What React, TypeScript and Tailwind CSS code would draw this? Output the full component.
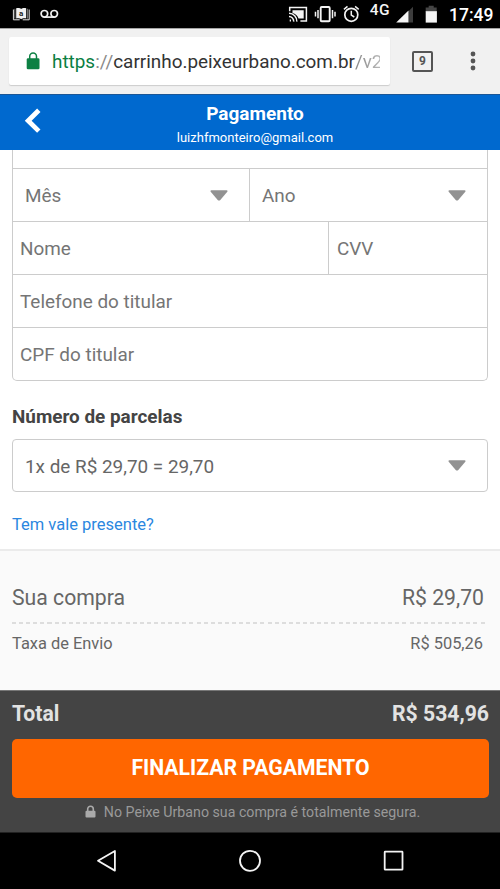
import type { ReactNode } from "react";

function StatusBar() {
  return (
    <div className="flex h-[28px] items-center justify-between bg-black pl-[12px] pr-[10px] text-white">
      <svg width="50" height="28" viewBox="0 0 50 28" fill="none">
        <path d="M4.200 8.200c2-.5 4-.2 5 .8 1-1 3-1.300 5-.8v10.300c-2-.4-4-.1-5 .8-1-.9-3-1.200-5-.8z" fill="#f1f1f1" />
        <path d="M1.400 9.500v10.300h6.300M17.200 9.500v10.300h-6.500" stroke="#e4e4e4" strokeWidth="1" />
        <path d="M2.900 8.800v9.800M15.600 8.800v9.800" stroke="#999" strokeWidth=".8" />
        <text x="9.200" y="16" textAnchor="middle" fontSize="8" fontWeight="700" fill="#222" className="font-['Roboto',sans-serif]">a</text>
        <circle cx="32.400" cy="13.800" r="3.300" stroke="#f1f1f1" strokeWidth="1.700" />
        <circle cx="42.200" cy="13.800" r="3.300" stroke="#f1f1f1" strokeWidth="1.700" />
        <path d="M32.400 17.100h9.800" stroke="#f1f1f1" strokeWidth="1.700" />
      </svg>
      <div className="flex items-center">
        <svg width="161" height="28" viewBox="0 0 161 28" fill="none">
          <g stroke="#f3f3f3" strokeWidth="1.500">
            <path d="M8.700 11.200V7.500h16.700v13.400h-6" />
            <path d="M8 13.300a7.800 7.800 0 0 1 7.800 8.300M8 16.500a4.800 4.800 0 0 1 4.700 5.100" />
            <path d="M8.700 20.500h1.300" strokeWidth="2.200" />
            <path d="M11.500 10.200h11.200v8.300h-5.200c-1-2.700-3-4.700-6-5.500z" fill="#f3f3f3" stroke="none" />
            <rect x="39.700" y="7" width="9" height="14.200" rx="1" strokeWidth="1.900" />
            <path d="M37 9.900v8.400M34.500 11.700v4.800M51.500 9.900v8.400M54 11.700v4.800" />
            <circle cx="70.300" cy="14.800" r="6.500" strokeWidth="1.700" />
            <path d="M70.300 10.800v4.300l3 1.900M62.900 9.400l3.600-3M77.700 9.400l-3.600-3" />
          </g>
          <text x="88.800" y="15.300" fontSize="15.500" fontWeight="500" letterSpacing=".3" fill="#f5f5f5" className="font-['Roboto',sans-serif]">4G</text>
          <path d="M132 6.800v15.800h-4.500V11.200z" fill="#3d3d3d" />
          <path d="M127.500 10.500v12.100h-12.300z" fill="#f5f5f5" />
          <path d="M144.700 12V7.500h3V5.800h5v1.700h3V12z" fill="#454545" />
          <path d="M144.700 11.200h11.200v11.400h-11.200z" fill="#f5f5f5" />
        </svg>
        <span className="mt-[2px] w-[48px] pl-[7px] text-[17.500px] leading-5 font-medium whitespace-nowrap">17:49</span>
      </div>
    </div>
  );
}

function BrowserBar() {
  return (
    <div className="flex h-[66px] items-center border-t border-[#a5a5a5] bg-[#f1f1f1] pb-px pl-[9px]">
      <div className="flex h-[48px] w-[381px] items-center overflow-hidden rounded-[2px] bg-white pl-[17px] shadow-[0_1px_1px_#ccc]">
        <svg width="14" height="18" viewBox="0 0 14 18" fill="none">
          <rect x=".7" y="6.300" width="12.800" height="11" rx="1.300" fill="#0d8043" />
          <path d="M3.700 7V4.400a3.400 3.400 0 0 1 6.800 0V7" stroke="#0d8043" strokeWidth="1.500" />
        </svg>
        <span className="mt-px ml-[12px] w-[328px] overflow-hidden text-[18.900px] leading-7 whitespace-nowrap text-[#333]">
          <span className="text-[#0b8043]">https</span>
          <span className="text-[#8a8a8a]">://</span>
          carrinho.peixeurbano.com.br
          <span className="bg-linear-to-r from-[#888] to-[#bbb] bg-clip-text text-transparent">/v2</span>
        </span>
      </div>
      <span className="ml-[22px] flex size-[21px] items-center justify-center rounded-[2px] border-2 border-[#555] text-[12px] font-bold text-[#555]">9</span>
      <svg className="ml-[37px]" width="6" height="20" viewBox="0 0 6 20" fill="#555">
        <circle cx="3" cy="3" r="2.400" />
        <circle cx="3" cy="10" r="2.400" />
        <circle cx="3" cy="17" r="2.400" />
      </svg>
    </div>
  );
}

function Caret() {
  return (
    <svg width="18" height="11" viewBox="0 0 18 11" fill="#929292">
      <path d="M1.300.3h15.400c.8 0 1.100.9.600 1.500l-7 8.100c-.7.800-1.900.8-2.600 0L.7 1.800C.2 1.200.5.3 1.300.3z" />
    </svg>
  );
}

function Field({ className, children }: { className: string; children: ReactNode }) {
  return <div className={`flex items-center whitespace-nowrap ${className}`}>{children}</div>;
}

function CardForm() {
  return (
    <div className="mx-[12px] flex flex-col divide-y divide-[#ccc] rounded-b-[5px] border border-t-0 border-[#ccc] text-[18.900px] text-[#757575]">
      <div className="h-[19px]" />
      <div className="flex h-[53px] divide-x divide-[#ccc]">
        <Field className="w-[237px] justify-between pl-[12px] pr-[21px]">
          <span className="pt-[3px]">Mês</span>
          <Caret />
        </Field>
        <Field className="flex-1 justify-between pl-[12px] pr-[21px]">
          <span className="pt-[3px]">Ano</span>
          <Caret />
        </Field>
      </div>
      <div className="flex h-[53px] divide-x divide-[#ccc]">
        <Field className="w-[316px] pt-[3px] pl-[7px]">Nome</Field>
        <Field className="flex-1 pt-[3px] pl-[8px]">CVV</Field>
      </div>
      <Field className="h-[53px] pt-[3px] pl-[7px]">Telefone do titular</Field>
      <Field className="h-[52px] pt-[3px] pl-[7px]">CPF do titular</Field>
    </div>
  );
}

export default function App() {
  return (
    <div className="flex h-[889px] w-[500px] flex-col overflow-hidden bg-white font-['Roboto',sans-serif]">
      <StatusBar />
      <BrowserBar />
      <header className="flex h-[56px] items-center border-t border-[#1b5696] bg-[#0069cf] text-white">
        <svg className="-mt-[3px] ml-[24px] shrink-0" width="18" height="26" viewBox="0 0 18 26" fill="none" stroke="#fff" strokeWidth="4.800">
          <path d="M14.800 2.300 4.200 12.700l10.600 10.400" />
        </svg>
        <div className="mt-[5px] mr-[32px] flex flex-1 flex-col items-center">
          <h1 className="text-[19px] leading-[24px] font-bold">Pagamento</h1>
          <p className="text-[13px] leading-[23px]">luizhfmonteiro@gmail.com</p>
        </div>
      </header>
      <CardForm />
      <section className="flex h-[168px] flex-col px-[12px]">
        <h2 className="mt-[23px] text-[18.900px] leading-[26px] font-bold text-[#444]">Número de parcelas</h2>
        <div className="mt-[9px] flex h-[53px] shrink-0 items-center justify-between rounded-[4px] border border-[#ccc] pr-[21px] pl-[12px] text-[18.900px] text-[#666]">
          <span className="pt-[3px]">1x de R$ 29,70 = 29,70</span>
          <Caret />
        </div>
        <a className="mt-[21px] text-[16.500px] leading-[24px] text-[#2b87e0]">Tem vale presente?</a>
      </section>
      <section className="flex h-[141px] flex-col border-t-2 border-[#ebebeb] bg-[#fafafa] px-[12px] text-[#666]">
        <div className="mt-[32px] flex justify-between pr-[4px] text-[21.200px] leading-[30px]">
          <span>Sua compra</span>
          <span>R$ 29,70</span>
        </div>
        <div className="mt-[9px] h-[2px] bg-[repeating-linear-gradient(90deg,#ddd_0,#ddd_4px,transparent_4px,transparent_7.100px)]" />
        <div className="mt-[8px] flex justify-between pr-[5px] text-[16.400px] leading-[24px]">
          <span>Taxa de Envio</span>
          <span>R$ 505,26</span>
        </div>
      </section>
      <footer className="flex h-[142px] flex-col border-t border-[#777] bg-[#444] px-[12px]">
        <div className="-mr-px mt-[8px] flex justify-between text-[21.200px] leading-[30px] font-bold text-[#e2e2e2]">
          <span>Total</span>
          <span>R$ 534,96</span>
        </div>
        <button className="mt-[10px] -mr-px h-[59px] shrink-0 rounded-[5px] bg-[#ff6600] pb-px text-[21.200px] font-bold text-white">
          FINALIZAR PAGAMENTO
        </button>
        <div className="mt-[3px] flex items-center justify-center pl-[5px] text-[14.200px] leading-[22px] text-[#999]">
          <svg className="-mt-px mr-[8px]" width="11" height="13" viewBox="0 0 11 13" fill="none">
            <rect x=".5" y="5.800" width="10" height="6.800" rx="1" fill="#aaa" />
            <path d="M2.700 6.500V4a2.800 2.800 0 0 1 5.600 0v2.500" stroke="#aaa" strokeWidth="1.600" />
          </svg>
          <span className="whitespace-nowrap">No Peixe Urbano sua compra é totalmente segura.</span>
        </div>
      </footer>
      <nav className="flex h-[57px] border-t border-[#222] bg-black">
        <svg width="500" height="56" viewBox="0 0 500 56" fill="none" stroke="#f4f4f4" strokeWidth="1.800">
          <path d="M114.900 18v19.600L98 27.800z" strokeLinejoin="round" />
          <circle cx="250" cy="27.800" r="10" />
          <rect x="384.700" y="18.700" width="17.800" height="18" rx=".5" />
        </svg>
      </nav>
    </div>
  );
}
